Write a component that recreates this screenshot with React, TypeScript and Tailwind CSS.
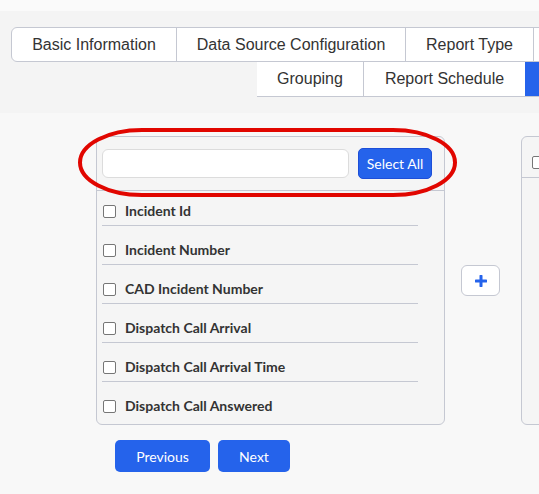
import React from "react";

const topTabs = [
  { label: "Basic Information", w: "w-[165px]" },
  { label: "Data Source Configuration", w: "w-[229px]" },
  { label: "Report Type", w: "w-[128px]" },
  { label: "", w: "w-[150px]" },
];

const fields = [
  "Incident Id",
  "Incident Number",
  "CAD Incident Number",
  "Dispatch Call Arrival",
  "Dispatch Call Arrival Time",
  "Dispatch Call Answered",
];

function Box() {
  return (
    <span className="inline-block w-[13px] h-[13px] rounded-[2px] border border-[#767676] bg-white shrink-0" />
  );
}

export default function App() {
  return (
    <div className="relative w-[539px] h-[494px] overflow-hidden bg-[#f8f8f8] font-['Liberation_Sans',Arial,sans-serif]">
      <div className="h-[11px] bg-[#fafafa]" />
      {/* step tabs */}
      <div className="h-[102px] bg-[#f4f4f4] pt-[16px]">
        <div className="flex ml-[11px] w-[720px] h-[35px] bg-white border border-[#c5c8d2] rounded-l-[6px]">
          {topTabs.map((t, i) => (
            <div
              key={i}
              className={`${t.w} shrink-0 flex items-center justify-center text-[16px] text-[#333] ${i < topTabs.length - 1 ? "border-r border-[#c5c8d2]" : ""}`}
            >
              {t.label}
            </div>
          ))}
        </div>
        <div className="flex ml-[257px] w-[400px] h-[35px] bg-white border-b border-[#c5c8d2]">
          <div className="w-[107px] shrink-0 flex items-center justify-center text-[16px] text-[#333] border-r border-[#c5c8d2]">
            Grouping
          </div>
          <div className="w-[161px] shrink-0 flex items-center justify-center text-[16px] text-[#333]">
            Report Schedule
          </div>
          <div className="flex-1 bg-[#2563eb]" />
        </div>
      </div>

      {/* field picker */}
      <div className="pt-[23px] pl-[96px] font-['Lato',sans-serif]">
        <div className="flex items-center">
          <div className="w-[349px] h-[289px] shrink-0 border border-[#c5c8d2] rounded-[6px] bg-[#f5f5f5] flex flex-col">
            <div className="flex items-center h-[54px] pl-[5px] pr-[12px] border-b border-[#c5c8d2]">
              <div className="w-[247px] h-[29px] bg-white border border-[#dcdcdc] rounded-[6px]" />
              <button className="ml-[9px] w-[74px] h-[31px] rounded-[5px] bg-[#2563eb] border border-[#1d4ed8] text-white text-[14px]">
                Select All
              </button>
            </div>
            <div className="pl-[5px] pr-[26px]">
              {fields.map((f, i) => (
                <div
                  key={f}
                  className={`flex items-center gap-[9px] pl-px h-[18px] box-content ${i === 0 ? "pt-[11px]" : "pt-[15px]"} ${i < fields.length - 1 ? "pb-[5px] border-b border-[#c5c8d2]" : ""}`}
                >
                  <Box />
                  <span className="text-[14px] font-bold text-[#333] leading-[18px]">{f}</span>
                </div>
              ))}
            </div>
          </div>
          <button className="ml-[16px] w-[39px] h-[31px] shrink-0 rounded-[6px] border border-[#c5c8d2] bg-white flex items-center justify-center">
            <svg width="12" height="12" viewBox="0 0 12 12">
              <path d="M6 1v10M1 6h10" stroke="#2563eb" strokeWidth="3" strokeLinecap="round" />
            </svg>
          </button>
          <div className="ml-[21px] w-[200px] h-[289px] shrink-0 border border-[#c5c8d2] rounded-[6px] bg-[#f5f5f5]">
            <div className="h-[41px] border-b border-[#c5c8d2] pl-[10px] pt-[14px]">
              <Box />
            </div>
          </div>
        </div>
        <div className="flex gap-[8px] ml-[19px] mt-[15px]">
          <button className="w-[95px] h-[32px] rounded-[5px] bg-[#2563eb] text-white text-[14px]">Previous</button>
          <button className="w-[72px] h-[32px] rounded-[5px] bg-[#2563eb] text-white text-[14px]">Next</button>
        </div>
      </div>

      {/* highlight around the search bar */}
      <svg className="absolute left-0 top-0 pointer-events-none" width="539" height="494">
        <rect x="80" y="130" width="375" height="65" rx="62" ry="33" fill="none" stroke="#e10600" strokeWidth="4" />
      </svg>
    </div>
  );
}
